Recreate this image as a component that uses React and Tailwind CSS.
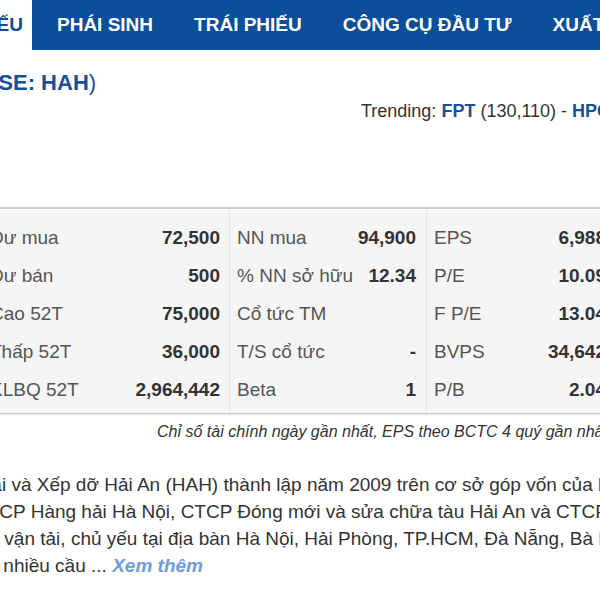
import React from 'react'

const TABS = ['PHÁI SINH', 'TRÁI PHIẾU', 'CÔNG CỤ ĐẦU TƯ', 'XUẤT BẢN']

const COLS = [
  {
    w: 'w-[247px] pl-[8px] pr-[9px]',
    rows: [
      ['Dư mua', '72,500'],
      ['Dư bán', '500'],
      ['Cao 52T', '75,000'],
      ['Thấp 52T', '36,000'],
      ['KLBQ 52T', '2,964,442'],
    ],
  },
  {
    w: 'w-[197px] border-l border-[#e4e4e4] pl-[7px] pr-[10px]',
    rows: [
      ['NN mua', '94,900'],
      ['% NN sở hữu', '12.34'],
      ['Cổ tức TM', ''],
      ['T/S cổ tức', '-'],
      ['Beta', '1'],
    ],
  },
  {
    w: 'w-[190px] border-l border-[#e4e4e4] pl-[7px] pr-[10px]',
    rows: [
      ['EPS', '6,988'],
      ['P/E', '10.09'],
      ['F P/E', '13.04'],
      ['BVPS', '34,642'],
      ['P/B', '2.04'],
    ],
  },
]

const LINES = [
  ['-ml-[53px]', 'Vận tải và Xếp dỡ Hải An (HAH) thành lập năm 2009 trên cơ sở góp vốn của ba cổ đông'],
  ['-ml-[26px]', 'CTCP Hàng hải Hà Nội, CTCP Đóng mới và sửa chữa tàu Hải An và CTCP Container'],
  ['-ml-[21px]', 'vụ vận tải, chủ yếu tại địa bàn Hà Nội, Hải Phòng, TP.HCM, Đà Nẵng, Bà Rịa - Vũng Tàu'],
]

export default function App() {
  return (
    <div className="h-[600px] w-[600px] overflow-hidden bg-white font-['Liberation_Sans',Arial,sans-serif] text-[#333]">
      {/* nav */}
      <div className="flex h-[50px] items-center bg-[#0b4e9b] whitespace-nowrap">
        <div className="flex h-full w-[32px] shrink-0 items-center justify-end overflow-hidden bg-white pr-[9px]">
          <span className="text-[19px] font-bold text-[#0b4e9b]">CỔ PHIẾU</span>
        </div>
        <div className="flex gap-[41px] pl-[25px] text-[19px] font-bold text-white">
          {TABS.map(t => <span key={t}>{t}</span>)}
        </div>
      </div>

      {/* title */}
      <div className="-ml-[42px] mt-[20px] whitespace-nowrap text-[22px] leading-[26px] text-[#15509b]">
        (<span className="font-bold">HOSE: HAH</span>)
      </div>
      <div className="ml-[361px] mt-[4px] whitespace-nowrap text-[18px] leading-[22px]">
        Trending: <b className="text-[#15509b]">FPT</b> (130,110) - <b className="text-[#15509b]">HPG</b> (95,400)
      </div>

      {/* table */}
      <div className="mt-[85px] border-t-2 border-[#cdcdcd] bg-white pt-px shadow-[0_1px_2px_rgba(0,0,0,0.3)]">
        <div className="-ml-[18px] flex bg-[#f5f5f5] whitespace-nowrap text-[19px]">
          {COLS.map((c, i) => (
            <div key={i} className={`${c.w} shrink-0 pb-[4px] pt-[9px]`}>
              {c.rows.map(([k, v]) => (
                <div key={k} className="flex h-[38px] items-center justify-between">
                  <span className="text-[#555]">{k}</span>
                  <span className="font-bold text-[#333]">{v}</span>
                </div>
              ))}
            </div>
          ))}
        </div>
      </div>

      <div className="ml-[157px] mt-[10px] whitespace-nowrap text-[16px] italic leading-[18px]">
        Chỉ số tài chính ngày gần nhất, EPS theo BCTC 4 quý gần nhất
      </div>

      {/* about */}
      <div className="mt-[30px] whitespace-nowrap text-[19px] leading-[27px]">
        {LINES.map(([m, t]) => <div key={t} className={m}>{t}</div>)}
        <div className="-ml-[22px]">
          có nhiều cầu ... <a className="font-bold italic text-[#6b9cdb]">Xem thêm</a>
        </div>
      </div>
    </div>
  )
}
